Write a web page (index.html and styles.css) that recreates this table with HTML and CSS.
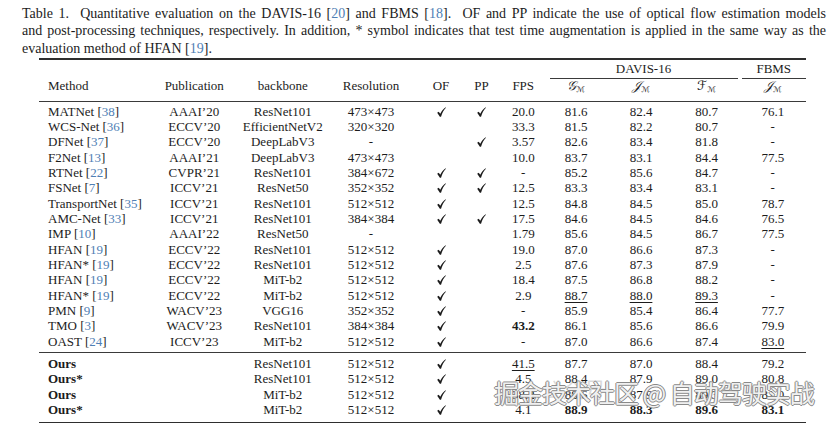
FILE: index.html
```html
<!DOCTYPE html>
<html>
<head>
<meta charset="utf-8">
<link rel="stylesheet" href="styles.css">
</head>
<body>
<div class="page">
  <div class="caption">
    <div class="cap-line just">Table 1.&nbsp; Quantitative evaluation on the DAVIS-16 [<span class="ref">20</span>] and FBMS [<span class="ref">18</span>].&nbsp; OF and PP indicate the use of optical flow estimation models</div>
    <div class="cap-line just">and post-processing techniques, respectively. In addition, * symbol indicates that test time augmentation is applied in the same way as the</div>
    <div class="cap-line">evaluation method of HFAN [<span class="ref">19</span>].</div>
  </div>

  <table class="results">
    <colgroup>
      <col class="c-method"><col class="c-pub"><col class="c-bb"><col class="c-res"><col class="c-of"><col class="c-pp"><col class="c-fps"><col class="c-g"><col class="c-j"><col class="c-f"><col class="c-fb">
    </colgroup>
    <thead>
      <tr class="h1">
        <th colspan="7"></th>
        <th colspan="3"><div class="group">DAVIS-16</div></th>
        <th><div class="group fb">FBMS</div></th>
      </tr>
      <tr class="h2">
        <th class="method">Method</th>
        <th>Publication</th>
        <th>backbone</th>
        <th class="res">Resolution</th>
        <th class="of">OF</th>
        <th>PP</th>
        <th class="fps">FPS</th>
        <th class="g"><span class="m">𝒢<sub>ℳ</sub></span></th>
        <th><span class="m">𝒥<sub>ℳ</sub></span></th>
        <th><span class="m">ℱ<sub>ℳ</sub></span></th>
        <th><span class="m">𝒥<sub>ℳ</sub></span></th>
      </tr>
    </thead>
    <tbody class="prior">
      <tr class="first"><td class="method">MATNet [<span class="ref">38</span>]</td><td>AAAI’20</td><td>ResNet101</td><td class="res">473×473</td><td class="of"><svg class="ck" viewBox="0 0 10 11"><path d="M0.2 6.3 L1.9 5.2 L3.6 7.5 C5.2 4.5 7.2 1.9 9.6 0.2 L9.9 0.9 C7.6 3.2 5.7 6.6 4.5 10.7 L3.2 10.7 Z"/></svg></td><td><svg class="ck" viewBox="0 0 10 11"><path d="M0.2 6.3 L1.9 5.2 L3.6 7.5 C5.2 4.5 7.2 1.9 9.6 0.2 L9.9 0.9 C7.6 3.2 5.7 6.6 4.5 10.7 L3.2 10.7 Z"/></svg></td><td class="fps">20.0</td><td class="g">81.6</td><td>82.4</td><td>80.7</td><td>76.1</td></tr>
      <tr><td class="method">WCS-Net [<span class="ref">36</span>]</td><td>ECCV’20</td><td>EfficientNetV2</td><td class="res">320×320</td><td class="of"></td><td></td><td class="fps">33.3</td><td class="g">81.5</td><td>82.2</td><td>80.7</td><td>-</td></tr>
      <tr><td class="method">DFNet [<span class="ref">37</span>]</td><td>ECCV’20</td><td>DeepLabV3</td><td class="res">-</td><td class="of"></td><td><svg class="ck" viewBox="0 0 10 11"><path d="M0.2 6.3 L1.9 5.2 L3.6 7.5 C5.2 4.5 7.2 1.9 9.6 0.2 L9.9 0.9 C7.6 3.2 5.7 6.6 4.5 10.7 L3.2 10.7 Z"/></svg></td><td class="fps">3.57</td><td class="g">82.6</td><td>83.4</td><td>81.8</td><td>-</td></tr>
      <tr><td class="method">F2Net [<span class="ref">13</span>]</td><td>AAAI’21</td><td>DeepLabV3</td><td class="res">473×473</td><td class="of"></td><td></td><td class="fps">10.0</td><td class="g">83.7</td><td>83.1</td><td>84.4</td><td>77.5</td></tr>
      <tr><td class="method">RTNet [<span class="ref">22</span>]</td><td>CVPR’21</td><td>ResNet101</td><td class="res">384×672</td><td class="of"><svg class="ck" viewBox="0 0 10 11"><path d="M0.2 6.3 L1.9 5.2 L3.6 7.5 C5.2 4.5 7.2 1.9 9.6 0.2 L9.9 0.9 C7.6 3.2 5.7 6.6 4.5 10.7 L3.2 10.7 Z"/></svg></td><td><svg class="ck" viewBox="0 0 10 11"><path d="M0.2 6.3 L1.9 5.2 L3.6 7.5 C5.2 4.5 7.2 1.9 9.6 0.2 L9.9 0.9 C7.6 3.2 5.7 6.6 4.5 10.7 L3.2 10.7 Z"/></svg></td><td class="fps">-</td><td class="g">85.2</td><td>85.6</td><td>84.7</td><td>-</td></tr>
      <tr><td class="method">FSNet [<span class="ref">7</span>]</td><td>ICCV’21</td><td>ResNet50</td><td class="res">352×352</td><td class="of"><svg class="ck" viewBox="0 0 10 11"><path d="M0.2 6.3 L1.9 5.2 L3.6 7.5 C5.2 4.5 7.2 1.9 9.6 0.2 L9.9 0.9 C7.6 3.2 5.7 6.6 4.5 10.7 L3.2 10.7 Z"/></svg></td><td><svg class="ck" viewBox="0 0 10 11"><path d="M0.2 6.3 L1.9 5.2 L3.6 7.5 C5.2 4.5 7.2 1.9 9.6 0.2 L9.9 0.9 C7.6 3.2 5.7 6.6 4.5 10.7 L3.2 10.7 Z"/></svg></td><td class="fps">12.5</td><td class="g">83.3</td><td>83.4</td><td>83.1</td><td>-</td></tr>
      <tr><td class="method">TransportNet [<span class="ref">35</span>]</td><td>ICCV’21</td><td>ResNet101</td><td class="res">512×512</td><td class="of"><svg class="ck" viewBox="0 0 10 11"><path d="M0.2 6.3 L1.9 5.2 L3.6 7.5 C5.2 4.5 7.2 1.9 9.6 0.2 L9.9 0.9 C7.6 3.2 5.7 6.6 4.5 10.7 L3.2 10.7 Z"/></svg></td><td></td><td class="fps">12.5</td><td class="g">84.8</td><td>84.5</td><td>85.0</td><td>78.7</td></tr>
      <tr><td class="method">AMC-Net [<span class="ref">33</span>]</td><td>ICCV’21</td><td>ResNet101</td><td class="res">384×384</td><td class="of"><svg class="ck" viewBox="0 0 10 11"><path d="M0.2 6.3 L1.9 5.2 L3.6 7.5 C5.2 4.5 7.2 1.9 9.6 0.2 L9.9 0.9 C7.6 3.2 5.7 6.6 4.5 10.7 L3.2 10.7 Z"/></svg></td><td><svg class="ck" viewBox="0 0 10 11"><path d="M0.2 6.3 L1.9 5.2 L3.6 7.5 C5.2 4.5 7.2 1.9 9.6 0.2 L9.9 0.9 C7.6 3.2 5.7 6.6 4.5 10.7 L3.2 10.7 Z"/></svg></td><td class="fps">17.5</td><td class="g">84.6</td><td>84.5</td><td>84.6</td><td>76.5</td></tr>
      <tr><td class="method">IMP [<span class="ref">10</span>]</td><td>AAAI’22</td><td>ResNet50</td><td class="res">-</td><td class="of"></td><td></td><td class="fps">1.79</td><td class="g">85.6</td><td>84.5</td><td>86.7</td><td>77.5</td></tr>
      <tr><td class="method">HFAN [<span class="ref">19</span>]</td><td>ECCV’22</td><td>ResNet101</td><td class="res">512×512</td><td class="of"><svg class="ck" viewBox="0 0 10 11"><path d="M0.2 6.3 L1.9 5.2 L3.6 7.5 C5.2 4.5 7.2 1.9 9.6 0.2 L9.9 0.9 C7.6 3.2 5.7 6.6 4.5 10.7 L3.2 10.7 Z"/></svg></td><td></td><td class="fps">19.0</td><td class="g">87.0</td><td>86.6</td><td>87.3</td><td>-</td></tr>
      <tr><td class="method">HFAN* [<span class="ref">19</span>]</td><td>ECCV’22</td><td>ResNet101</td><td class="res">512×512</td><td class="of"><svg class="ck" viewBox="0 0 10 11"><path d="M0.2 6.3 L1.9 5.2 L3.6 7.5 C5.2 4.5 7.2 1.9 9.6 0.2 L9.9 0.9 C7.6 3.2 5.7 6.6 4.5 10.7 L3.2 10.7 Z"/></svg></td><td></td><td class="fps">2.5</td><td class="g">87.6</td><td>87.3</td><td>87.9</td><td>-</td></tr>
      <tr><td class="method">HFAN [<span class="ref">19</span>]</td><td>ECCV’22</td><td>MiT-b2</td><td class="res">512×512</td><td class="of"><svg class="ck" viewBox="0 0 10 11"><path d="M0.2 6.3 L1.9 5.2 L3.6 7.5 C5.2 4.5 7.2 1.9 9.6 0.2 L9.9 0.9 C7.6 3.2 5.7 6.6 4.5 10.7 L3.2 10.7 Z"/></svg></td><td></td><td class="fps">18.4</td><td class="g">87.5</td><td>86.8</td><td>88.2</td><td>-</td></tr>
      <tr><td class="method">HFAN* [<span class="ref">19</span>]</td><td>ECCV’22</td><td>MiT-b2</td><td class="res">512×512</td><td class="of"><svg class="ck" viewBox="0 0 10 11"><path d="M0.2 6.3 L1.9 5.2 L3.6 7.5 C5.2 4.5 7.2 1.9 9.6 0.2 L9.9 0.9 C7.6 3.2 5.7 6.6 4.5 10.7 L3.2 10.7 Z"/></svg></td><td></td><td class="fps">2.9</td><td class="g"><span class="u">88.7</span></td><td><span class="u">88.0</span></td><td><span class="u">89.3</span></td><td>-</td></tr>
      <tr><td class="method">PMN [<span class="ref">9</span>]</td><td>WACV’23</td><td>VGG16</td><td class="res">352×352</td><td class="of"><svg class="ck" viewBox="0 0 10 11"><path d="M0.2 6.3 L1.9 5.2 L3.6 7.5 C5.2 4.5 7.2 1.9 9.6 0.2 L9.9 0.9 C7.6 3.2 5.7 6.6 4.5 10.7 L3.2 10.7 Z"/></svg></td><td></td><td class="fps">-</td><td class="g">85.9</td><td>85.4</td><td>86.4</td><td>77.7</td></tr>
      <tr><td class="method">TMO [<span class="ref">3</span>]</td><td>WACV’23</td><td>ResNet101</td><td class="res">384×384</td><td class="of"><svg class="ck" viewBox="0 0 10 11"><path d="M0.2 6.3 L1.9 5.2 L3.6 7.5 C5.2 4.5 7.2 1.9 9.6 0.2 L9.9 0.9 C7.6 3.2 5.7 6.6 4.5 10.7 L3.2 10.7 Z"/></svg></td><td></td><td class="fps"><b>43.2</b></td><td class="g">86.1</td><td>85.6</td><td>86.6</td><td>79.9</td></tr>
      <tr class="last"><td class="method">OAST [<span class="ref">24</span>]</td><td>ICCV’23</td><td>MiT-b2</td><td class="res">512×512</td><td class="of"><svg class="ck" viewBox="0 0 10 11"><path d="M0.2 6.3 L1.9 5.2 L3.6 7.5 C5.2 4.5 7.2 1.9 9.6 0.2 L9.9 0.9 C7.6 3.2 5.7 6.6 4.5 10.7 L3.2 10.7 Z"/></svg></td><td></td><td class="fps">-</td><td class="g">87.0</td><td>86.6</td><td>87.4</td><td><span class="u">83.0</span></td></tr>
    </tbody>
    <tbody class="ours">
      <tr class="first"><td class="method"><b>Ours</b></td><td></td><td>ResNet101</td><td class="res">512×512</td><td class="of"><svg class="ck" viewBox="0 0 10 11"><path d="M0.2 6.3 L1.9 5.2 L3.6 7.5 C5.2 4.5 7.2 1.9 9.6 0.2 L9.9 0.9 C7.6 3.2 5.7 6.6 4.5 10.7 L3.2 10.7 Z"/></svg></td><td></td><td class="fps"><span class="u">41.5</span></td><td class="g">87.7</td><td>87.0</td><td>88.4</td><td>79.2</td></tr>
      <tr><td class="method"><b>Ours*</b></td><td></td><td>ResNet101</td><td class="res">512×512</td><td class="of"><svg class="ck" viewBox="0 0 10 11"><path d="M0.2 6.3 L1.9 5.2 L3.6 7.5 C5.2 4.5 7.2 1.9 9.6 0.2 L9.9 0.9 C7.6 3.2 5.7 6.6 4.5 10.7 L3.2 10.7 Z"/></svg></td><td></td><td class="fps">4.5</td><td class="g">88.4</td><td>87.9</td><td>89.0</td><td>80.8</td></tr>
      <tr><td class="method"><b>Ours</b></td><td></td><td>MiT-b2</td><td class="res">512×512</td><td class="of"><svg class="ck" viewBox="0 0 10 11"><path d="M0.2 6.3 L1.9 5.2 L3.6 7.5 C5.2 4.5 7.2 1.9 9.6 0.2 L9.9 0.9 C7.6 3.2 5.7 6.6 4.5 10.7 L3.2 10.7 Z"/></svg></td><td></td><td class="fps">38.2</td><td class="g">88.6</td><td>87.9</td><td>89.3</td><td>81.0</td></tr>
      <tr class="last"><td class="method"><b>Ours*</b></td><td></td><td>MiT-b2</td><td class="res">512×512</td><td class="of"><svg class="ck" viewBox="0 0 10 11"><path d="M0.2 6.3 L1.9 5.2 L3.6 7.5 C5.2 4.5 7.2 1.9 9.6 0.2 L9.9 0.9 C7.6 3.2 5.7 6.6 4.5 10.7 L3.2 10.7 Z"/></svg></td><td></td><td class="fps">4.1</td><td class="g"><b>88.9</b></td><td><b>88.3</b></td><td><b>89.6</b></td><td><b>83.1</b></td></tr>
    </tbody>
  </table>

  <div class="ghost">公众号</div>
  <div class="watermark">掘金技术社区 @ 自动驾驶实战</div>
</div>
</body>
</html>
```

FILE: styles.css
```css
* { box-sizing: border-box; }
html, body { margin: 0; padding: 0; background: #ffffff; }
body {
  width: 830px;
  height: 423px;
  overflow: hidden;
  font-family: "Liberation Serif", "Times New Roman", serif;
  color: #1c1c1c;
}
.page { position: relative; width: 830px; height: 423px; }

.caption {
  padding: 4.5px 0 0 22px;
  width: 826px;
  font-size: 14px;
  line-height: 17.5px;
}
.cap-line { white-space: nowrap; }
.cap-line.just { text-align: justify; text-align-last: justify; white-space: normal; }
.ref { color: #4f80b5; }

.results {
  margin: 1px 0 0 39px;
  width: 767px;
  table-layout: fixed;
  border-collapse: collapse;
  font-size: 13px;
  line-height: 15.33px;
  border-top: 2px solid #2e2e2e;
  border-bottom: 2px solid #2e2e2e;
}
.c-method { width: 111px; }
.c-pub { width: 88.5px; }
.c-bb { width: 88.5px; }
.c-res { width: 79px; }
.c-of { width: 55px; }
.c-pp { width: 41px; }
.c-fps { width: 47.5px; }
.c-g { width: 59px; }
.c-j { width: 65px; }
.c-f { width: 66px; }
.c-fb { width: 66.5px; }

.results th, .results td {
  padding: 0;
  text-align: center;
  font-weight: normal;
  white-space: nowrap;
  vertical-align: baseline;
}
.results .method { text-align: left; padding-left: 9px; }
.results .res { padding-left: 9px; }
.results .of { padding-left: 15px; }
.results .fps { padding-right: 5px; }
.results .g { padding-right: 6px; }

.h1 th { padding-top: 1px; vertical-align: bottom; }
.group {
  margin: 0 2px 0 0;
  padding-bottom: 2px;
  border-bottom: 1px solid #3a3a3a;
  line-height: 15.33px;
}
.group.fb { margin: 0 0 0 2px; }

.h2 th { line-height: 12px; padding-top: 1px; padding-bottom: 5px; }
thead { border-bottom: 1px solid #3a3a3a; }

.m {
  font-family: "DejaVu Serif", "DejaVu Sans", serif;
  font-style: italic;
  font-size: 13px;
}
.m sub { font-size: 8px; vertical-align: -2px; }

.prior tr.first td { padding-top: 1.5px; }
.prior tr.last td { padding-bottom: 2.5px; }
.ours { border-top: 1px solid #3a3a3a; }
.ours tr.first td { padding-top: 3.5px; }
.ours tr.last td { padding-bottom: 4.5px; }

.ck {
  width: 9px;
  height: 10px;
  fill: #1c1c1c;
  vertical-align: -1px;
}
.u { text-decoration: underline; text-decoration-thickness: 1px; text-underline-offset: 2px; }
b { font-weight: bold; }

.ghost {
  position: absolute;
  left: 540px;
  top: 374px;
  font-family: "Noto Sans CJK SC", sans-serif;
  font-size: 22px;
  line-height: 28px;
  color: rgba(150, 150, 150, 0.35);
  white-space: nowrap;
}
.watermark {
  position: absolute;
  left: 494px;
  top: 376px;
  font-family: "Noto Sans CJK SC", sans-serif;
  font-size: 25px;
  line-height: 32px;
  letter-spacing: -1px;
  white-space: nowrap;
  color: rgba(255, 255, 255, 0.9);
  text-shadow: 1px 0 0 #8a8a8a, -1px 0 0 #8a8a8a, 0 1px 0 #8a8a8a, 0 -1px 0 #8a8a8a;
}
```
